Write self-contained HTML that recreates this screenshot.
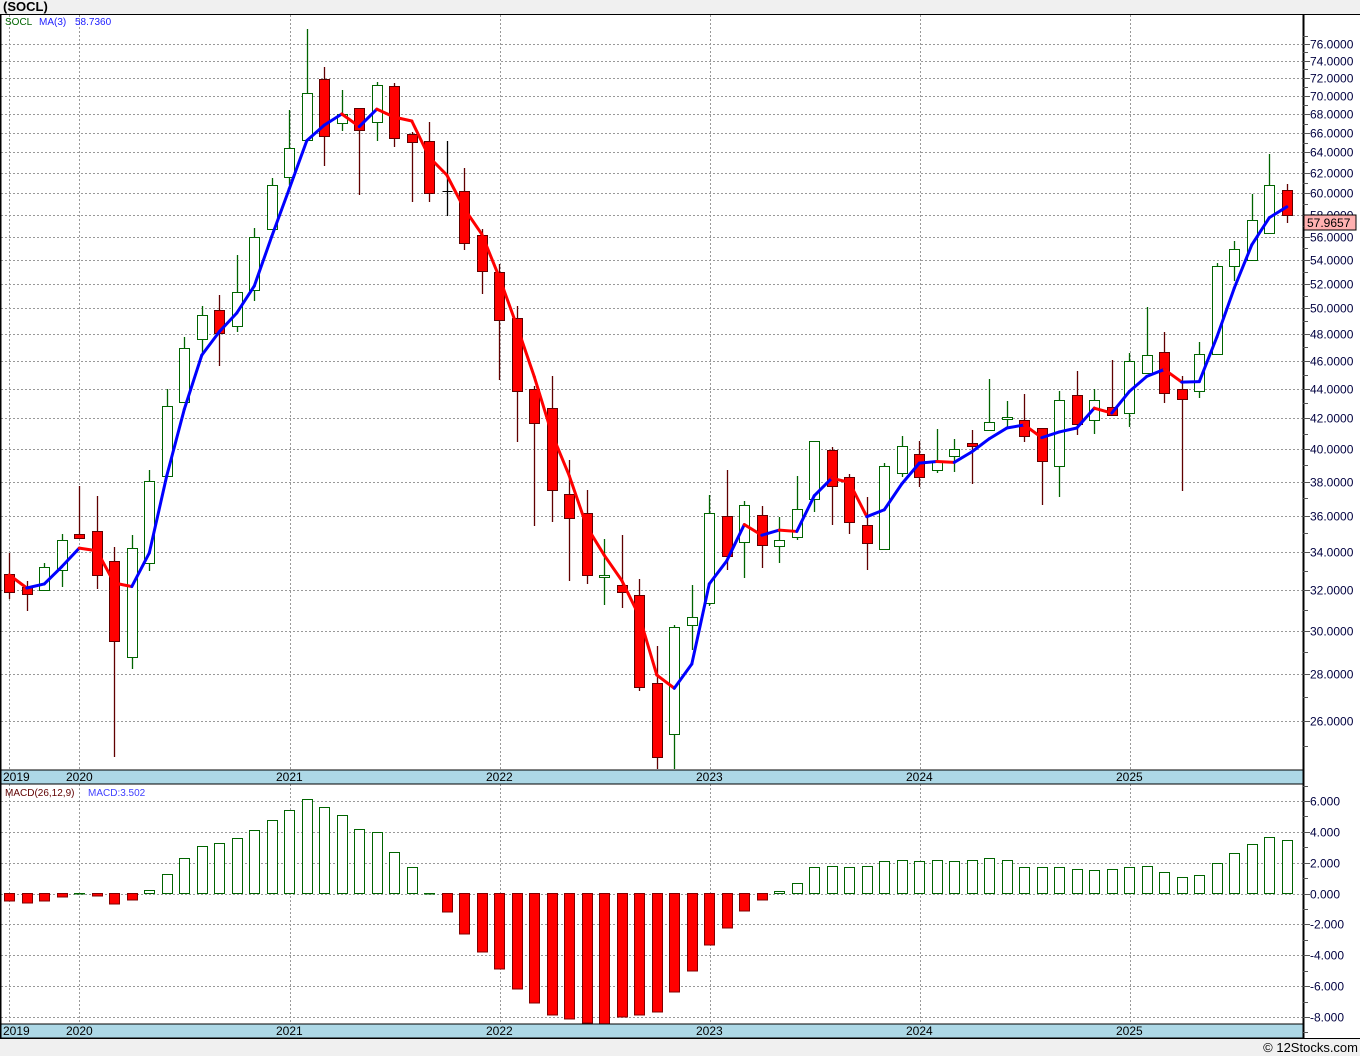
<!DOCTYPE html>
<html><head><meta charset="utf-8">
<style>
html,body{margin:0;padding:0;background:#f0f0f0;}
body{width:1360px;height:1056px;overflow:hidden;position:relative;font-family:"Liberation Sans",sans-serif;}
svg{position:absolute;left:0;top:0;}
text{font-family:"Liberation Sans",sans-serif;}
</style></head><body>
<svg id="s" width="1360" height="1056" xmlns="http://www.w3.org/2000/svg">
<rect x="0" y="14" width="1360" height="1024" fill="#fff"/>
<g id="grid"></g>
<g id="candles"></g>
<g id="ma"></g>
<g id="macd"></g>
<line x1="0" y1="14.5" x2="1360" y2="14.5" stroke="#000"/>
<line x1="0.5" y1="14" x2="0.5" y2="1038" stroke="#000" stroke-width="2"/>
<line x1="1303.5" y1="14" x2="1303.5" y2="1038" stroke="#000" stroke-width="2"/>
<rect x="1" y="770" width="1302" height="14" fill="#add8e6" stroke="#000"/>
<rect x="1" y="1024" width="1302" height="14" fill="#add8e6" stroke="#000"/>
<line x1="0" y1="1038.5" x2="1360" y2="1038.5" stroke="#000"/>
<g font-size="12" fill="#000">
<text x="3" y="781">2019</text><text x="66" y="781">2020</text><text x="276" y="781">2021</text><text x="486" y="781">2022</text><text x="696" y="781">2023</text><text x="906" y="781">2024</text><text x="1116" y="781">2025</text>
<text x="3" y="1035">2019</text><text x="66" y="1035">2020</text><text x="276" y="1035">2021</text><text x="486" y="1035">2022</text><text x="696" y="1035">2023</text><text x="906" y="1035">2024</text><text x="1116" y="1035">2025</text>
</g>
<text x="3" y="11" font-size="13" font-weight="bold">(SOCL)</text>
<text x="5" y="25" font-size="10" fill="#006400">SOCL</text>
<text x="39" y="25" font-size="10" fill="#2020ff">MA(3)</text>
<text x="75" y="25" font-size="10" fill="#2020ff">58.7360</text>
<text x="5" y="796" font-size="10" fill="#600000">MACD(26,12,9)</text>
<text x="88" y="796" font-size="10" fill="#4040ff">MACD:3.502</text>
<g id="axis" font-size="12" fill="#000040"></g>
<rect x="1304" y="215" width="52" height="15" fill="#ffb0b0" stroke="#000"/>
<text x="1307" y="227" font-size="12" fill="#000">57.9657</text>
<text x="1358" y="1052" font-size="13" text-anchor="end" fill="#000">© 12Stocks.com</text>
</svg>
<script>
var NS="http://www.w3.org/2000/svg";
function el(p,t,a){var e=document.createElementNS(NS,t);for(var k in a)e.setAttribute(k,a[k]);p.appendChild(e);return e;}
var grid=document.getElementById('grid'),axis=document.getElementById('axis');
function py(p){return 44+(Math.log(76)-Math.log(p))*631.2;}
for(var p=26;p<=76;p+=2){var y=Math.round(py(p))+0.5;
 el(grid,'line',{x1:1,y1:y,x2:1303,y2:y,stroke:'#999','stroke-dasharray':'2,2'});
 el(axis,'line',{x1:1303,y1:y,x2:1310,y2:y,stroke:'#555'});
 var t=el(axis,'text',{x:1310,y:y+4});t.textContent=p.toFixed(4);}
for(var p=25;p<=77;p+=2){var y=Math.round(py(p))+0.5;el(axis,'line',{x1:1303,y1:y,x2:1308,y2:y,stroke:'#555'});}
function my(v){return 893.6-v*15.43;}
for(var v=-8;v<=6;v+=2){var y=Math.round(my(v))+0.5;
 el(grid,'line',{x1:1,y1:y,x2:1303,y2:y,stroke:'#999','stroke-dasharray':'2,2'});
 el(axis,'line',{x1:1303,y1:y,x2:1310,y2:y,stroke:'#555'});
 var t=el(axis,'text',{x:1310,y:y+4});t.textContent=v.toFixed(3);}
for(var v=-9;v<=7;v+=2){var y=Math.round(my(v))+0.5;el(axis,'line',{x1:1303,y1:y,x2:1308,y2:y,stroke:'#555'});}
[9,79,290,500,710,920,1130].forEach(function(x){
 el(grid,'line',{x1:x+.5,y1:15,x2:x+.5,y2:770,stroke:'#999','stroke-dasharray':'2,2'});
 el(grid,'line',{x1:x+.5,y1:784,x2:x+.5,y2:1024,stroke:'#999','stroke-dasharray':'2,2'});});
var D=[
['r',1158,1195,1115,1210],['r',1185,1200,1172,1235],['g',1143,1192,1135,1192],['g',1088,1150,1075,1185],['r',1075,1082,975,1082],
['r',1069,1160,995,1190],['r',1132,1298,1102,1540],['g',1103,1332,1077,1356],['g',963,1135,940,1153],['g',808,953,772,953],
['g',685,798,662,798],['g',616,667,598,700],['r',607,655,575,723],['g',568,640,492,652],['g',453,565,435,587],
['g',345,437,330,437],['g',267,328,188,345],['g',152,250,18,250],['r',124,243,98,306],['g',196,215,147,233],
['r',185,230,185,365],['g',135,213,130,253],['r',139,247,132,265],['r',238,255,235,380],['r',254,362,213,380],
['k',358,358,254,410],['r',358,466,310,480],['r',450,525,437,573],['r',526,628,510,752],['r',624,776,597,883],
['r',772,843,765,1058],['r',812,983,744,1050],['r',990,1041,920,1172],['r',1030,1160,982,1180],['g',1160,1165,1085,1222],
['r',1182,1196,1077,1230],['r',1203,1395,1168,1402],['r',1387,1540,1308,1565],['g',1270,1492,1265,1570],['g',1249,1265,1181,1318],
['g',1031,1218,993,1225],['r',1036,1121,941,1150],['g',1015,1091,1006,1166],['r',1034,1098,1016,1145],['g',1088,1100,1040,1135],
['g',1023,1081,953,1088],['g',881,1001,881,1028],['r',898,974,892,1055],['r',956,1050,950,1075],['r',1055,1094,997,1150],
['g',933,1106,927,1108],['g',891,947,870,955],['r',908,956,880,977],['g',923,941,855,948],['g',896,911,876,946],
['r',885,890,857,970],['g',841,857,750,857],['g',829,829,797,850],['r',837,870,782,883],['r',852,922,852,1015],
['g',795,933,775,998],['r',785,845,733,868],['g',795,836,772,865],['r',810,826,710,826],['g',712,822,697,850],
['g',701,738,600,738],['r',695,780,652,800],['r',772,792,745,985],['g',698,776,673,791],['g',515,698,507,698],
['g',478,514,463,545],['g',419,502,363,502],['g',346,446,280,448],['r',356,408,343,425]];
var K=750/1568;function cy(z){return 20+z*K;}
var cg=document.getElementById('candles'),closes=[];
D.forEach(function(d,i){var x=Math.round(9.3+17.5*i)+0.5;var bt=Math.round(cy(d[1])),bb=Math.round(cy(d[2])),wt=Math.round(cy(d[3])),wb=Math.min(769,Math.round(cy(d[4])));
 var wc=d[0]=='r'?'#600000':(d[0]=='g'?'#006400':'#000');
 el(cg,'line',{x1:x,y1:wt,x2:x,y2:wb,stroke:wc,'stroke-width':1.3});
 if(d[0]=='k'){el(cg,'line',{x1:x-5,y1:bt+.5,x2:x+5,y2:bt+.5,stroke:'#000'});}
 else{var h=Math.max(bb-bt,2);el(cg,'rect',{x:x-5,y:bt+.5,width:10,height:h,fill:d[0]=='r'?'#ff0000':'#fff',stroke:wc,'stroke-width':1});}
 var c=d[0]=='r'?cy(d[2]):cy(d[1]);closes.push(Math.exp(Math.log(76)-(c-44)/631.2));});
var ma=[];for(var i=0;i<closes.length;i++){var a=closes.slice(Math.max(0,i-2),i+1);ma.push(a.reduce(function(s,v){return s+v},0)/a.length);}
ma[0]=Math.exp(Math.log(76)-(575-44)/631.2);
ma[1]=Math.exp(Math.log(76)-(588-44)/631.2);
var mg=document.getElementById('ma');
for(var i=1;i<ma.length;i++){var x0=9.3+17.5*(i-1),x1=9.3+17.5*i;
 el(mg,'line',{x1:x0,y1:py(ma[i-1]),x2:x1,y2:py(ma[i]),stroke:ma[i]<ma[i-1]?'#ff0000':'#0000ff','stroke-width':3,'stroke-linecap':'round'});}
var M=[-0.5,-0.6,-0.5,-0.2,0.03,-0.15,-0.7,-0.4,0.25,1.25,2.3,3.1,3.3,3.6,4.1,4.8,5.4,6.1,5.6,5.1,4.2,4.0,2.7,1.7,0.02,
-1.2,-2.6,-3.8,-4.9,-6.2,-7.1,-7.9,-8.1,-8.4,-8.5,-8.0,-7.9,-7.7,-6.4,-5.0,-3.3,-2.2,-1.1,-0.4,0.15,0.7,1.7,1.8,1.7,1.8,
2.1,2.2,2.1,2.2,2.1,2.2,2.3,2.2,1.7,1.7,1.7,1.6,1.5,1.6,1.7,1.8,1.4,1.1,1.2,2.0,2.6,3.2,3.7,3.5];
var g2=document.getElementById('macd'),z=893.5;
M.forEach(function(v,i){var x=Math.round(9.3+17.5*i)-5+0.5;var y=my(v);
 if(v>=0){el(g2,'rect',{x:x,y:Math.round(y)+.5,width:10,height:Math.max(0.5,z-Math.round(y)-.5),fill:'#fff',stroke:'#006400'});}
 else{el(g2,'rect',{x:x,y:z,width:10,height:Math.round(y)-z,fill:'#ff0000',stroke:'#800000'});}});
</script>
</body></html>
